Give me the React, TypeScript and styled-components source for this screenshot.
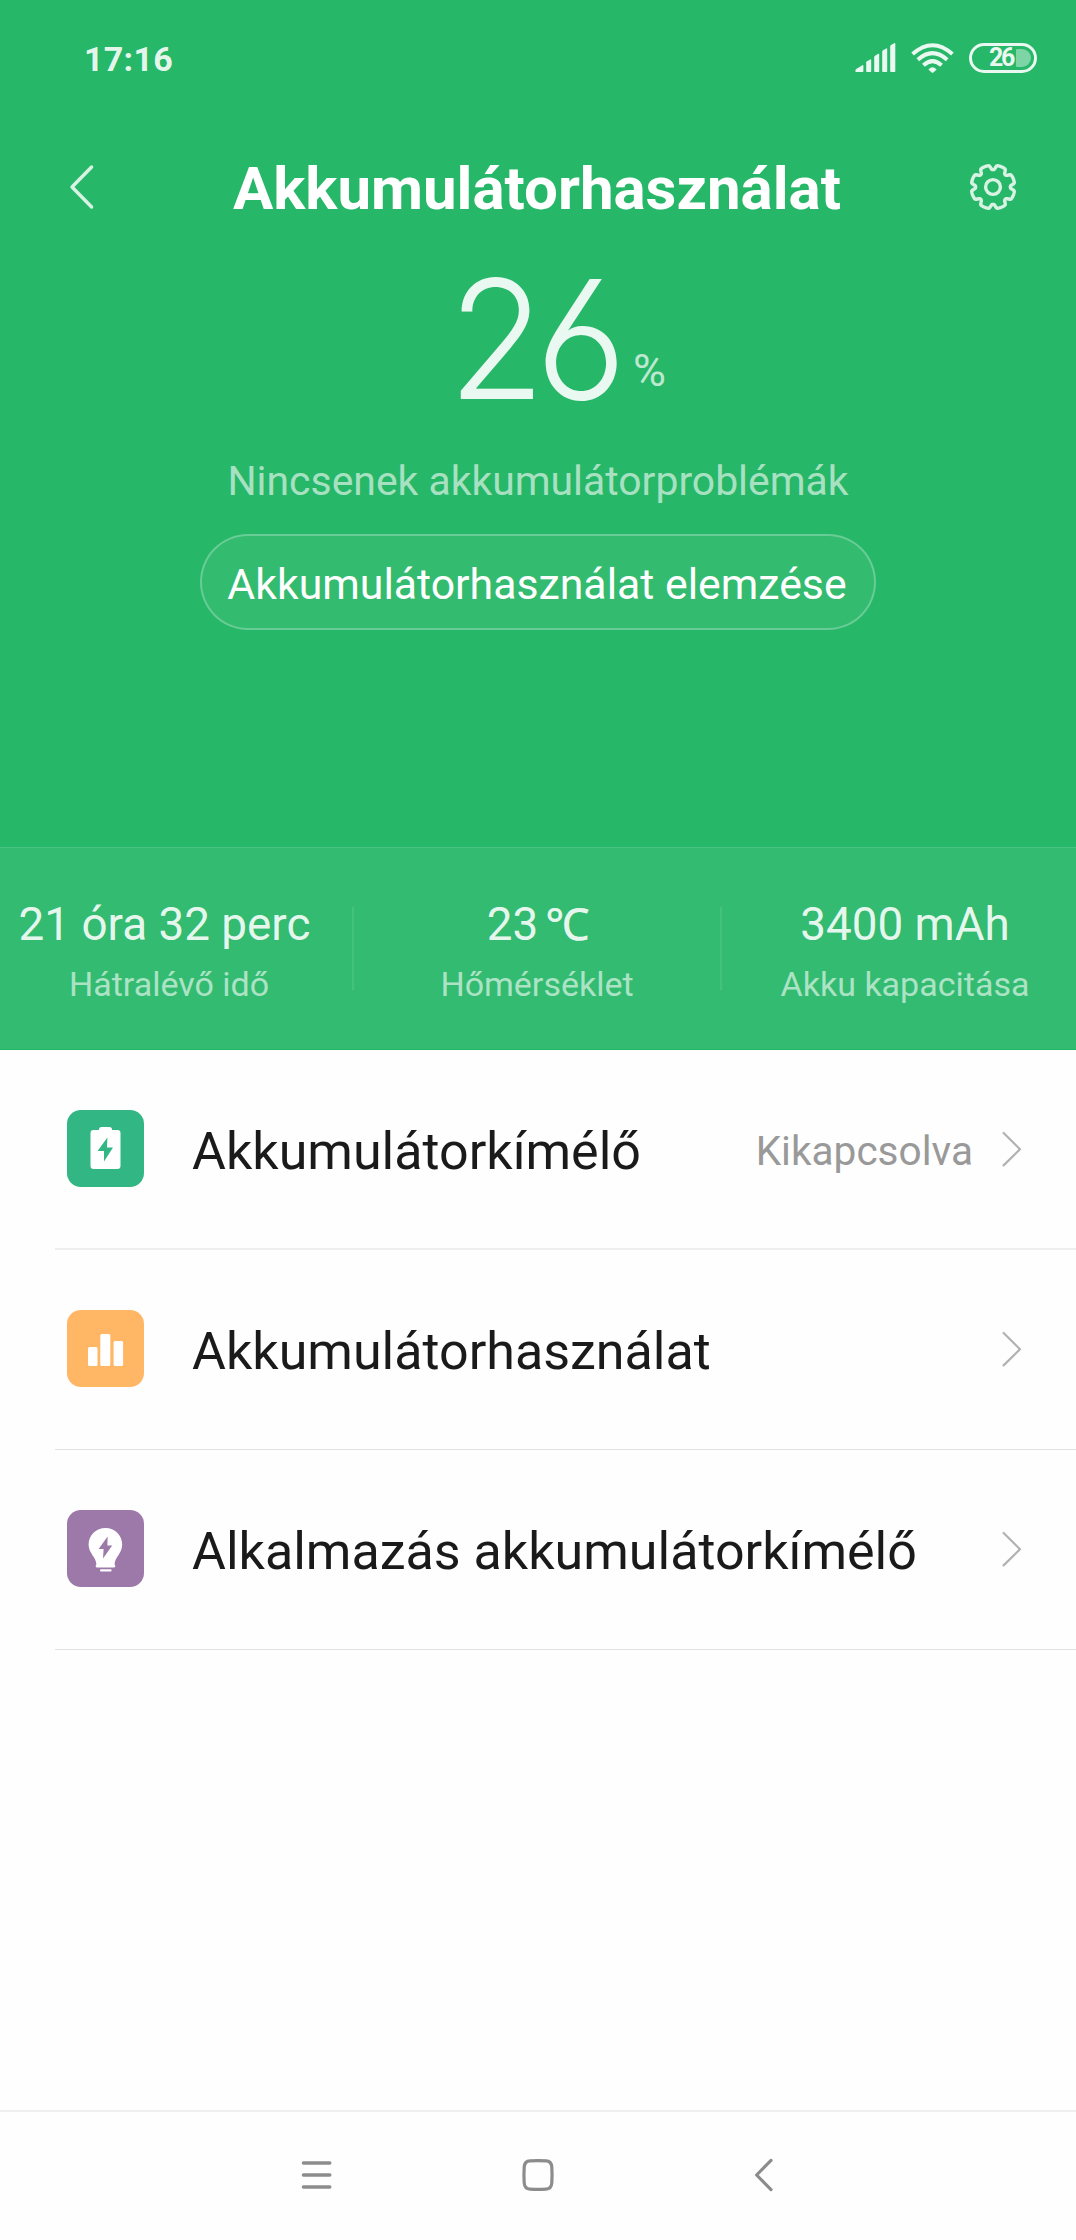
import React from "react";
import styled, { createGlobalStyle } from "styled-components";

const GlobalStyle = createGlobalStyle`
  *, *::before, *::after { box-sizing: border-box; }
  html, body { margin: 0; padding: 0; background: #fefefe; }
  body { font-family: Roboto, "Noto Sans", sans-serif; }
  svg { display: block; flex: none; }
`;

const Screen = styled.div`
  width: 1076px;
  height: 2240px;
  display: flex;
  flex-direction: column;
  background: #fefefe;
  overflow: hidden;
`;

const Hero = styled.section`
  height: 847px;
  flex: none;
  display: flex;
  flex-direction: column;
  align-items: center;
  background: #27b768;
  color: #fff;
`;

const StatusBar = styled.div`
  width: 100%;
  height: 116px;
  flex: none;
  display: flex;
  align-items: center;
  justify-content: space-between;
  padding: 0 39px 0 84px;
`;

const Clock = styled.span`
  padding-top: 1px;
  font-size: 34px;
  font-weight: 700;
  line-height: 40px;
  letter-spacing: 0.3px;
  color: rgba(255, 255, 255, 0.9);
`;

const StatusIcons = styled.div`
  display: flex;
  align-items: center;
  gap: 15px;
`;

const BatteryPill = styled.div`
  width: 68px;
  height: 30px;
  border: 3px solid rgba(255, 255, 255, 0.9);
  border-radius: 15px;
  display: flex;
  align-items: center;
  justify-content: flex-end;
  gap: 3px;
  padding-right: 3px;
`;

const BatteryText = styled.span`
  font-size: 25px;
  font-weight: 700;
  line-height: 24px;
  letter-spacing: -2.4px;
  color: rgba(255, 255, 255, 0.92);
`;

const BatteryLevel = styled.span`
  width: 15px;
  height: 18px;
  border-radius: 1px 9px 9px 1px;
  background: rgba(255, 255, 255, 0.4);
`;

const TitleBar = styled.header`
  width: 100%;
  height: 140px;
  flex: none;
  display: flex;
  align-items: center;
  justify-content: space-between;
  padding: 1px 58px 0 69px;
`;

const Title = styled.h1`
  margin: 0 0 0 11px;
  font-size: 60px;
  font-weight: 700;
  line-height: 70px;
  padding-top: 5px;
`;

const Level = styled.div`
  align-self: flex-start;
  height: 150px;
  display: flex;
  align-items: flex-start;
  padding-left: 448px;
`;

const LevelValue = styled.span`
  width: 185px;
  padding-top: 8px;
  font-family: Inter, Roboto, sans-serif;
  font-feature-settings: "ss01";
  font-size: 165px;
  font-weight: 300;
  line-height: 150px;
  letter-spacing: -10px;
  transform: scaleX(0.96);
  transform-origin: left center;
  color: rgba(255, 255, 255, 0.9);
`;

const LevelUnit = styled.span`
  padding-top: 92px;
  font-size: 45px;
  line-height: 46px;
  color: rgba(255, 255, 255, 0.7);
`;

const Verdict = styled.p`
  margin: 51px 0 0;
  font-size: 40.9px;
  line-height: 48px;
  color: rgba(255, 255, 255, 0.6);
  white-space: nowrap;
`;

const AnalyseButton = styled.button`
  width: 676px;
  height: 96px;
  margin: 29px 0 0;
  padding: 4px 2px 0 0;
  border: 2px solid rgba(255, 255, 255, 0.3);
  border-radius: 48px;
  background: rgba(255, 255, 255, 0.06);
  background-clip: padding-box;
  color: #fff;
  font: 400 42.8px/50px Roboto, sans-serif;
  white-space: nowrap;
`;

const Stats = styled.section`
  height: 203px;
  flex: none;
  display: flex;
  align-items: flex-start;
  padding-top: 59px;
  background: #33bb71;
  border-top: 1px solid #48c281;
  border-bottom: 1px solid #1fb863;
`;

const Stat = styled.div<{ $width: number; $shift?: string }>`
  width: ${(p) => p.$width}px;
  height: 83px;
  display: flex;
  flex-direction: column;
  align-items: center;
  padding: ${(p) => p.$shift ?? "0"};
  white-space: nowrap;

  & + & {
    border-left: 2px solid #43c17d;
  }
`;

const StatValue = styled.span<{ $lead?: number; $trail?: number; $gap?: number }>`
  font-size: 45.8px;
  line-height: 54px;
  margin-top: -9px;
  padding: 0 ${(p) => p.$trail ?? 0}px 0 ${(p) => p.$lead ?? 0}px;
  word-spacing: ${(p) => p.$gap ?? 0}px;
  color: rgba(255, 255, 255, 0.9);
`;

const Degree = styled.span`
  font-size: 44px;
  line-height: 1;
  -webkit-text-stroke: 0.5px rgba(255, 255, 255, 0.9);
`;

const StatLabel = styled.span`
  margin-top: 12px;
  font-size: 34px;
  line-height: 40px;
  color: rgba(255, 255, 255, 0.6);
`;

const List = styled.main`
  flex: 1;
`;

const Row = styled.div`
  height: 200px;
  margin-left: 55px;
  padding: 0 54px 2px 12px;
  display: flex;
  align-items: center;
  border-bottom: 1px solid #e2e2e2;

  &:first-child {
    padding-bottom: 1px;
    border-bottom: 2px solid #eee;
  }
`;

const Tile = styled.div<{ $color: string }>`
  width: 77px;
  height: 77px;
  flex: none;
  border-radius: 14px;
  background: ${(p) => p.$color};
`;

const RowLabel = styled.span`
  flex: 1;
  padding: 6px 0 0 48px;
  font-size: 52px;
  line-height: 62px;
  color: #1a1a1a;
  white-space: nowrap;
`;

const RowValue = styled.span`
  padding-top: 4px;
  margin-right: 29px;
  font-size: 40.6px;
  line-height: 48px;
  color: #999;
`;

const NavBar = styled.nav`
  height: 130px;
  flex: none;
  display: flex;
  align-items: center;
  justify-content: space-between;
  padding: 0 302px 2px 301px;
  border-top: 2px solid #efefef;
`;

const HomeSlot = styled.span`
  margin-right: 10px;
`;

const GEAR_TEETH = 8;

function gearPath(cx: number, cy: number, outer: number, depth: number) {
  const points: string[] = [];
  for (let deg = 0; deg < 360; deg += 1.5) {
    const step = 360 / GEAR_TEETH;
    const offset = ((deg + step / 2) % step) - step / 2;
    const r = outer - depth * Math.exp(-Math.pow(offset / 8, 4)) - 0.6 * Math.pow(1 - Math.abs(offset / step) * 2, 2);
    const a = (deg * Math.PI) / 180;
    points.push(`${(cx + r * Math.sin(a)).toFixed(2)} ${(cy - r * Math.cos(a)).toFixed(2)}`);
  }
  return `M${points.join("L")}Z`;
}

const SignalIcon = () => (
  <svg width="41" height="30" viewBox="0 0 41 30" fill="#fff" fillOpacity="0.9">
    <path d="M0.3 28Q0.3 26.6 1.6 25.8L7 22.4Q8.4 21.6 8.4 23V28.2Q8.4 29 7.6 29H1.2Q.3 29 .3 28Z" />
    <path d="M11.2 19.6Q11.2 18.7 12 18.2L15.2 16.4Q16.2 16 16.2 17V28.2Q16.2 29 15.4 29H12Q11.2 29 11.2 28.2Z" />
    <path d="M19.2 14.2Q19.2 13.2 20 12.7L23.2 10.8Q24.2 10.4 24.2 11.4V28.2Q24.2 29 23.4 29H20Q19.2 29 19.2 28.2Z" />
    <path d="M27.2 8.8Q27.2 7.8 28 7.3L31.2 5.4Q32.2 5 32.2 6V28.2Q32.2 29 31.4 29H28Q27.2 29 27.2 28.2Z" />
    <path d="M35.2 3.4Q35.2 2.4 36 1.9L39.2.2Q40.3-.2 40.3.8V28.2Q40.3 29 39.5 29H36Q35.2 29 35.2 28.2Z" />
  </svg>
);

const WifiIcon = () => (
  <svg width="43" height="30" viewBox="0 0 43 30" fill="none" stroke="#fff" strokeOpacity="0.9" strokeWidth="4">
    <path d="M1.6 11.1Q21.5-6.6 41.4 11.1" />
    <path d="M6.8 16.8Q21.5 3.6 36.2 16.8" />
    <path d="M12.4 22.3Q21.5 13.9 30.6 22.3" />
    <path d="M17.4 26.4Q21.5 22 25.6 26.4L22.4 29.4Q21.5 30.2 20.6 29.4Z" fill="#fff" fillOpacity="0.9" stroke="none" />
  </svg>
);

const BackIcon = () => (
  <svg width="26" height="46" viewBox="0 0 26 46" fill="none" stroke="#fff" strokeOpacity="0.82" strokeWidth="3.4" strokeLinecap="round" strokeLinejoin="round">
    <path d="M22.6 3L3 23L22.6 43" />
  </svg>
);

const GearIcon = () => (
  <svg width="50" height="50" viewBox="0 0 50 50" fill="none" stroke="#fff" strokeOpacity="0.82" strokeWidth="3.4" strokeLinejoin="round">
    <path d={gearPath(25, 25, 21.9, 4)} />
    <circle cx="25" cy="25" r="7.4" />
  </svg>
);

const ChevronIcon = () => (
  <svg width="20" height="38" viewBox="0 0 20 38" fill="none" stroke="#b2b2b2" strokeWidth="2.2" strokeLinecap="round" strokeLinejoin="round">
    <path d="M1.6 3L18 19.2L1.6 35.4" />
  </svg>
);

const SaverGlyph = () => (
  <svg width="77" height="77" viewBox="0 0 77 77" fill="#fff">
    <path d="M32 19.5Q32 17 34.5 17H42.5Q45 17 45 19.5V20H50.5Q53.5 20 53.5 23V56Q53.5 59 50.5 59H26.5Q23.5 59 23.5 56V23Q23.5 20 26.5 20H32Z" />
    <path d="M40.4 27.6L30.6 41H37L37 51.5L46 37.6H40Z" fill="#31b684" />
  </svg>
);

const UsageGlyph = () => (
  <svg width="77" height="77" viewBox="0 0 77 77" fill="#fff">
    <rect x="21" y="37" width="9.5" height="19" rx="1.5" />
    <rect x="33.3" y="24" width="10" height="32" rx="1.5" />
    <rect x="46.6" y="31" width="9.5" height="25" rx="1.5" />
  </svg>
);

const BulbGlyph = () => (
  <svg width="77" height="77" viewBox="0 0 77 77" fill="#fff">
    <path d="M38.5 18C47.8 18 55.2 25.4 55.2 34.5C55.2 43.4 47.6 47.4 47.6 54.4C48.6 55 48.6 57.4 47.2 57.4H29.8C28.4 57.4 28.4 55 29.4 54.4C29.4 47.4 21.6 43.4 21.6 34.5C21.6 25.4 29.2 18 38.5 18Z" />
    <rect x="33" y="59.2" width="11.6" height="2.4" rx="1.1" />
    <path d="M40.6 26.4L31.6 39H36.6L36 48.6L45.2 35.6H40.4Z" fill="#9d79a9" />
  </svg>
);

const MenuIcon = () => (
  <svg width="31" height="34" viewBox="0 0 31 34" stroke="#8c8c8c" strokeWidth="3.4" strokeLinecap="round">
    <path d="M2.4 5H28.8M2.4 17H28.8M2.4 29H28.8" />
  </svg>
);

const HomeIcon = () => (
  <svg width="34" height="34" viewBox="0 0 34 34" fill="none" stroke="#8c8c8c" strokeWidth="3.2">
    <path d="M9 2.9Q17 2.3 25 2.9Q30.4 3.2 30.8 9Q31.3 17 30.8 25Q30.4 30.8 25 31.1Q17 31.7 9 31.1Q3.6 30.8 3.2 25Q2.7 17 3.2 9Q3.6 3.2 9 2.9Z" />
  </svg>
);

const NavBackIcon = () => (
  <svg width="20" height="34" viewBox="0 0 20 34" fill="none" stroke="#8c8c8c" strokeWidth="3.2" strokeLinecap="round" strokeLinejoin="round">
    <path d="M17 2.4L2.6 17L17 31.6" />
  </svg>
);

const rows = [
  { label: "Akkumulátorkímélő", value: "Kikapcsolva", color: "#31b684", glyph: <SaverGlyph /> },
  { label: "Akkumulátorhasználat", color: "#ffb765", glyph: <UsageGlyph /> },
  { label: "Alkalmazás akkumulátorkímélő", color: "#9d79a9", glyph: <BulbGlyph /> },
];

export default function App() {
  return (
    <>
      <GlobalStyle />
      <Screen>
        <Hero>
          <StatusBar>
            <Clock>17:16</Clock>
            <StatusIcons>
              <SignalIcon />
              <WifiIcon />
              <BatteryPill>
                <BatteryText>26</BatteryText>
                <BatteryLevel />
              </BatteryPill>
            </StatusIcons>
          </StatusBar>
          <TitleBar>
            <BackIcon />
            <Title>Akkumulátorhasználat</Title>
            <GearIcon />
          </TitleBar>
          <Level>
            <LevelValue>26</LevelValue>
            <LevelUnit>%</LevelUnit>
          </Level>
          <Verdict>Nincsenek akkumulátorproblémák</Verdict>
          <AnalyseButton>Akkumulátorhasználat elemzése</AnalyseButton>
        </Hero>
        <Stats>
          <Stat $width={352} $shift="0 14px 0 0">
            <StatValue $trail={9}>21 óra 32 perc</StatValue>
            <StatLabel>Hátralévő idő</StatLabel>
          </Stat>
          <Stat $width={368}>
            <StatValue $lead={2} $gap={-4}>
              23 <Degree>℃</Degree>
            </StatValue>
            <StatLabel>Hőmérséklet</StatLabel>
          </Stat>
          <Stat $width={356} $shift="0 0 0 12px">
            <StatValue>3400 mAh</StatValue>
            <StatLabel>Akku kapacitása</StatLabel>
          </Stat>
        </Stats>
        <List>
          {rows.map((row) => (
            <Row key={row.label}>
              <Tile $color={row.color}>{row.glyph}</Tile>
              <RowLabel>{row.label}</RowLabel>
              {row.value && <RowValue>{row.value}</RowValue>}
              <ChevronIcon />
            </Row>
          ))}
        </List>
        <NavBar>
          <MenuIcon />
          <HomeSlot>
            <HomeIcon />
          </HomeSlot>
          <NavBackIcon />
        </NavBar>
      </Screen>
    </>
  );
}
